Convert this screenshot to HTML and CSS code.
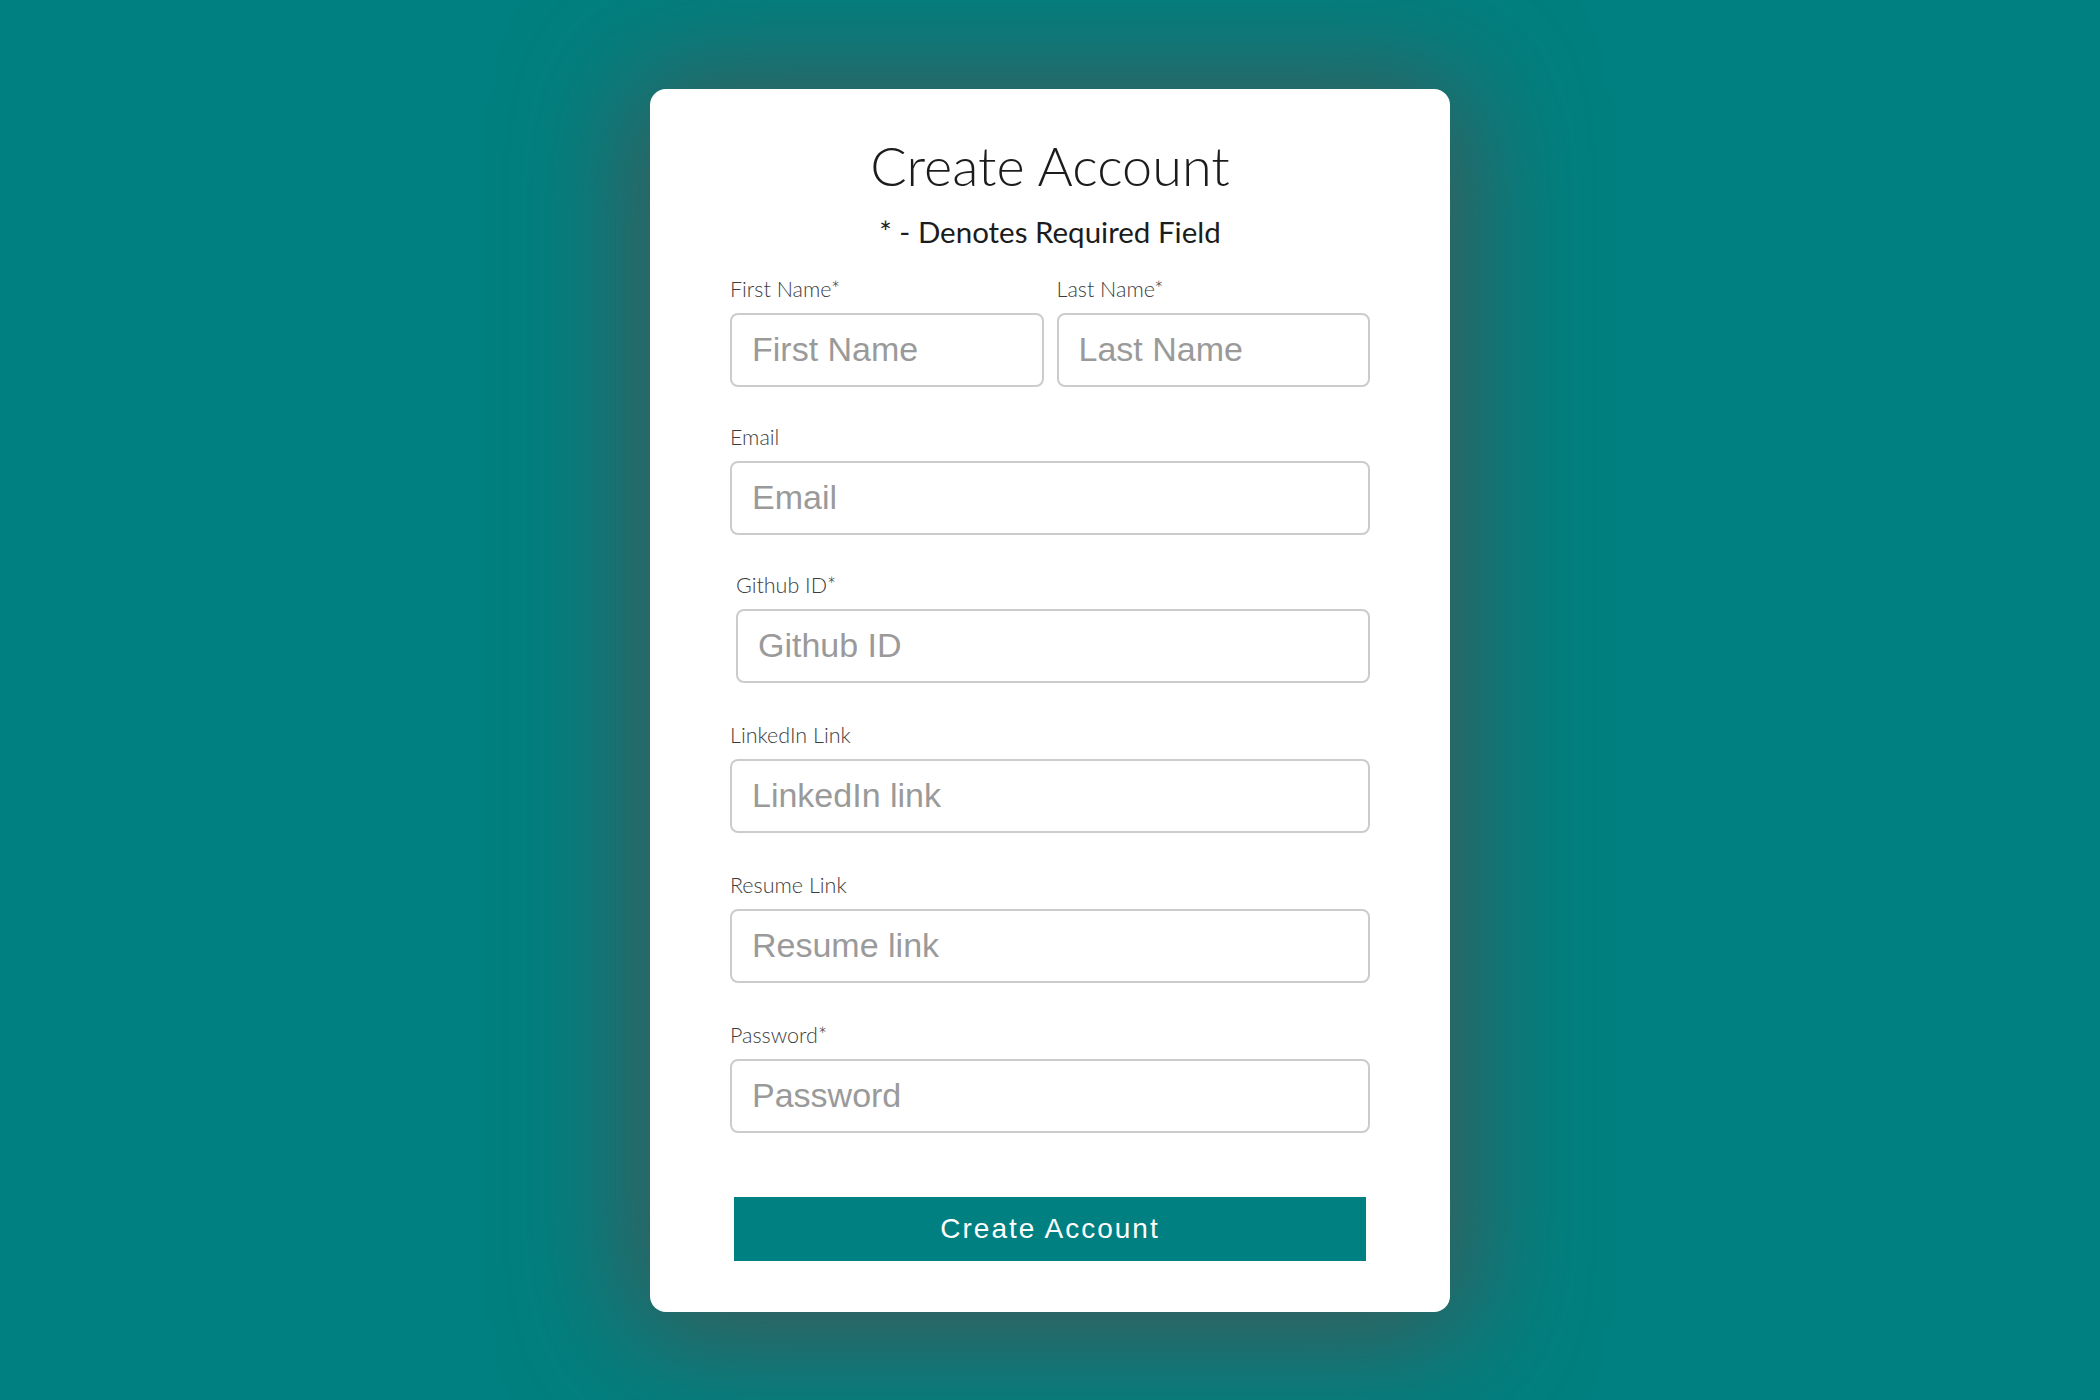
FILE: index.html
```html
<!DOCTYPE html>
<html lang="en">
<head>
<meta charset="utf-8">
<title>Create Account</title>
<link rel="stylesheet" href="styles.css">
</head>
<body>
<main class="page">
  <form class="card">
    <h1 class="title">Create Account</h1>
    <p class="subtitle">* - Denotes Required Field</p>
    <div class="row">
      <div class="field">
        <label class="label">First Name*</label>
        <input class="input" type="text" placeholder="First Name">
      </div>
      <div class="field">
        <label class="label">Last Name*</label>
        <input class="input" type="text" placeholder="Last Name">
      </div>
    </div>
    <div class="field field-tight">
      <label class="label">Email</label>
      <input class="input" type="email" placeholder="Email">
    </div>
    <div class="field field-indent field-tight">
      <label class="label">Github ID*</label>
      <input class="input" type="text" placeholder="Github ID">
    </div>
    <div class="field">
      <label class="label">LinkedIn Link</label>
      <input class="input" type="text" placeholder="LinkedIn link">
    </div>
    <div class="field">
      <label class="label">Resume Link</label>
      <input class="input" type="text" placeholder="Resume link">
    </div>
    <div class="field">
      <label class="label">Password*</label>
      <input class="input" type="password" placeholder="Password">
    </div>
    <button class="submit" type="button">Create Account</button>
  </form>
</main>
</body>
</html>
```
FILE: styles.css
```css
html, body {
  margin: 0;
  padding: 0;
}
body {
  background: #008080;
  font-family: "Lato", "Open Sans", sans-serif;
}
.page {
  min-height: 100vh;
  display: flex;
  align-items: center;
  justify-content: center;
}
.card {
  width: 800px;
  box-sizing: border-box;
  padding: 45px 80px 51px;
  background: #ffffff;
  border-radius: 16px;
  box-shadow: 0 8px 120px 22px rgba(80, 80, 80, 0.78);
  display: flex;
  flex-direction: column;
}
.title {
  margin: 0;
  text-align: center;
  font-family: "Lato", sans-serif;
  font-weight: 300;
  font-size: 54px;
  line-height: 64px;
  color: #1c1c1c;
}
.subtitle {
  margin: 17px 0 0;
  text-align: center;
  font-family: "Lato", sans-serif;
  font-weight: 400;
  font-size: 29.5px;
  line-height: 34px;
  color: #1c1c1c;
}
.row {
  display: grid;
  grid-template-columns: 1fr 1fr;
  gap: 13px;
  margin-top: 28px;
}
.row .field {
  margin-top: 0;
}
.field {
  display: flex;
  flex-direction: column;
  margin-top: 40px;
}
.row + .field-tight,
.field-tight + .field-tight {
  margin-top: 38px;
}
.field-indent {
  margin-left: 6px;
}
.label {
  font-family: "Lato", sans-serif;
  font-weight: 300;
  font-size: 21.5px;
  line-height: 24px;
  color: #3d3d3d;
  margin-bottom: 12px;
}
.input {
  box-sizing: border-box;
  width: 100%;
  height: 74px;
  margin: 0;
  padding: 0 20px;
  border: 2px solid #cccccc;
  border-radius: 8px;
  background: #ffffff;
  font-family: "Liberation Sans", Arial, sans-serif;
  font-size: 34px;
  color: #333;
  outline: none;
}
.input::placeholder {
  color: #9a9a9a;
  opacity: 1;
}
.submit {
  margin: 64px 4px 0;
  height: 64px;
  border: none;
  background: #008080;
  color: #ffffff;
  font-family: "Liberation Sans", Arial, sans-serif;
  font-size: 28px;
  letter-spacing: 2px;
  cursor: pointer;
}
```
